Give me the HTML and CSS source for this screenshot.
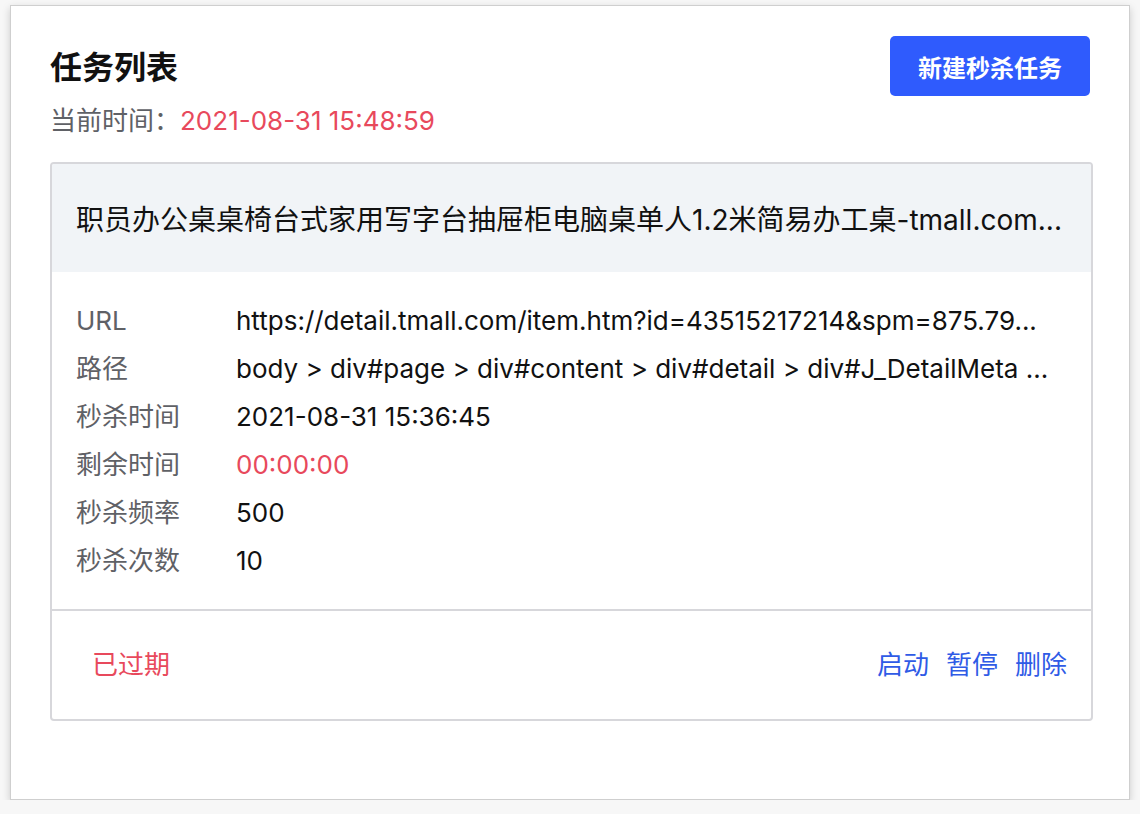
FILE: index.html
```html
<!DOCTYPE html>
<html lang="zh-CN">
<head>
<meta charset="utf-8">
<title>任务列表</title>
<link rel="stylesheet" href="styles.css">
</head>
<body>
<div class="panel">
  <div class="top">
    <div class="heading">
      <h1 class="title">任务列表</h1>
      <div class="now"><span class="now-label">当前时间：</span><span class="red">2021-08-31 15:48:59</span></div>
    </div>
    <button class="btn-primary">新建秒杀任务</button>
  </div>

  <div class="card">
    <div class="card-head">职员办公桌桌椅台式家用写字台抽屉柜电脑桌单人1.2米简易办工桌-tmall.com...</div>
    <div class="card-body">
      <div class="row"><div class="label">URL</div><div class="value">https://detail.tmall.com/item.htm?id=43515217214&amp;spm=875.79...</div></div>
      <div class="row"><div class="label">路径</div><div class="value">body &gt; div#page &gt; div#content &gt; div#detail &gt; div#J_DetailMeta ...</div></div>
      <div class="row"><div class="label">秒杀时间</div><div class="value">2021-08-31 15:36:45</div></div>
      <div class="row"><div class="label">剩余时间</div><div class="value red">00:00:00</div></div>
      <div class="row"><div class="label">秒杀频率</div><div class="value">500</div></div>
      <div class="row"><div class="label">秒杀次数</div><div class="value">10</div></div>
    </div>
    <div class="card-foot">
      <span class="status red">已过期</span>
      <div class="actions">
        <a class="link">启动</a>
        <a class="link">暂停</a>
        <a class="link">删除</a>
      </div>
    </div>
  </div>
</div>
</body>
</html>
```

FILE: styles.css
```css
* { box-sizing: border-box; }
html, body { margin: 0; }
body {
  background: #f7f7f7;
  padding: 5px 10px 0 10px;
  font-family: Inter, "Noto Sans CJK SC", sans-serif;
  color: #111;
}
.panel {
  background: #fff;
  height: 795px;
  border: 1px solid #cfcfcf;
  box-shadow: 0 3px 8px rgba(0,0,0,0.18);
  padding: 30px 39px 0 39px;
}
.top {
  display: flex;
  justify-content: space-between;
  align-items: flex-start;
}
.title {
  margin: 12px 0 0 0;
  font-size: 32px;
  line-height: 40px;
  font-weight: 700;
  color: #111;
}
.now {
  margin-top: 15px;
  font-size: 26px;
  line-height: 36px;
}
.now-label { color: #5f6166; }
.red { color: #e8495c; }
.btn-primary {
  width: 200px;
  height: 60px;
  border: none;
  border-radius: 5px;
  background: #2f5bfd;
  color: #fff;
  font-family: Inter, "Noto Sans CJK SC", sans-serif;
  font-size: 24px;
  font-weight: 700;
  padding: 0;
}
.card {
  margin-top: 23px;
  margin-right: -3px;
  border: 2px solid #d7d7db;
  border-radius: 4px;
  overflow: hidden;
}
.card-head {
  background: #f1f4f7;
  height: 108px;
  display: flex;
  align-items: center;
  padding: 0 24px;
  font-size: 28px;
  white-space: nowrap;
  overflow: hidden;
  color: #111;
}
.card-body {
  padding: 25px 24px 24px 24px;
  border-bottom: 2px solid #d7d7db;
}
.row {
  display: flex;
  font-size: 26px;
  line-height: 48px;
}
.label {
  width: 160px;
  flex: none;
  color: #5f6166;
}
.value {
  white-space: nowrap;
  overflow: hidden;
  color: #111;
}
.value.red { color: #e8495c; }
.card-foot {
  height: 108px;
  display: flex;
  align-items: center;
  justify-content: space-between;
  padding: 0 24px 6px 40px;
  font-size: 26px;
}
.actions {
  display: flex;
  gap: 17px;
}
.link {
  color: #2f5be6;
  cursor: pointer;
}
```
